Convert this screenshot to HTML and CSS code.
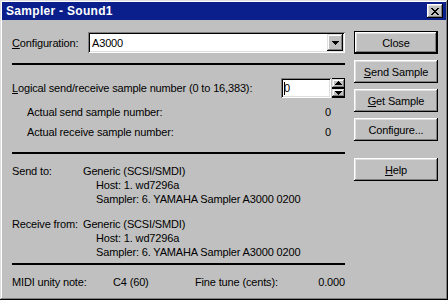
FILE: index.html
```html
<!DOCTYPE html>
<html lang="en">
<head>
    <meta charset="UTF-8">
    <title>Sampler - Sound1</title>
    <link rel="stylesheet" href="styles.css">
</head>
<body>
    <div class="window">
        <div class="titlebar">
            <span class="title">Sampler - Sound1</span>
            <div class="title-btn">
                <svg width="8" height="7" viewBox="0 0 8 7">
                    <path d="M0 0h2v1h1v1h2v-1h1v-1h2v1h-1v1h-1v1h-1v1h1v1h1v1h1v1h-2v-1h-1v-1h-2v1h-1v1h-2v-1h1v-1h1v-1h1v-1h-1v-1h-1v-1h-1z" fill="#000"/>
                </svg>
            </div>
        </div>

        <div class="dialog">
            <div class="main">
                <div class="row config-row">
                    <label class="config-label"><u>C</u>onfiguration:</label>
                    <div class="combo">
                        <span class="combo-text">A3000</span>
                        <div class="combo-arrow">
                            <svg width="7" height="4" viewBox="0 0 7 4"><path d="M0 0h7v1h-1v1h-1v1h-1v1h-1v-1h-1v-1h-1v-1h-1z" fill="#000"/></svg>
                        </div>
                    </div>
                </div>

                <div class="sep"></div>

                <div class="row logical-row">
                    <label><u>L</u>ogical send/receive sample number (0 to 16,383):</label>
                    <div class="spin">
                        <div class="spin-edit"><span class="caret"></span>0</div>
                        <div class="spin-btns">
                            <div class="spin-btn">
                                <svg width="7" height="4" viewBox="0 0 7 4"><path d="M3 0h1v1h1v1h1v1h1v1h-7v-1h1v-1h1v-1h1z" fill="#000"/></svg>
                            </div>
                            <div class="spin-btn">
                                <svg width="7" height="4" viewBox="0 0 7 4"><path d="M0 0h7v1h-1v1h-1v1h-1v1h-1v-1h-1v-1h-1v-1h-1z" fill="#000"/></svg>
                            </div>
                        </div>
                    </div>
                </div>

                <div class="actual">
                    <div class="actual-row"><span>Actual send sample number:</span><span>0</span></div>
                    <div class="actual-row"><span>Actual receive sample number:</span><span>0</span></div>
                </div>

                <div class="sep"></div>

                <div class="target">
                    <span class="target-label">Send to:</span>
                    <div class="target-info">
                        <div>Generic (SCSI/SMDI)</div>
                        <div class="sub">Host: 1. wd7296a</div>
                        <div class="sub">Sampler: 6. YAMAHA Sampler A3000 0200</div>
                    </div>
                </div>

                <div class="target receive">
                    <span class="target-label">Receive from:</span>
                    <div class="target-info">
                        <div>Generic (SCSI/SMDI)</div>
                        <div class="sub">Host: 1. wd7296a</div>
                        <div class="sub">Sampler: 6. YAMAHA Sampler A3000 0200</div>
                    </div>
                </div>

                <div class="sep sep-last"></div>

                <div class="midi">
                    <span>MIDI unity note:</span>
                    <span>C4 (60)</span>
                    <span>Fine tune (cents):</span>
                    <span class="fine">0.000</span>
                </div>
            </div>

            <div class="buttons">
                <button class="btn default">Close</button>
                <button class="btn"><u>S</u>end Sample</button>
                <button class="btn"><u>G</u>et Sample</button>
                <button class="btn">Configure...</button>
                <button class="btn help"><u>H</u>elp</button>
            </div>
        </div>
    </div>
</body>
</html>
```

FILE: styles.css
```css
body {
    margin: 0;
    padding: 0;
    background-color: #c0c0c0;
    font-family: 'Liberation Sans', Arial, sans-serif;
    font-size: 11px;
    letter-spacing: -0.15px;
    color: #000;
}

u {
    text-decoration: underline;
    text-underline-offset: 1px;
}

.window {
    width: 448px;
    height: 300px;
    box-sizing: border-box;
    padding: 2px;
    background: #c0c0c0;
    box-shadow: inset -1px -1px #000, inset 1px 1px #dfdfdf, inset -2px -2px #808080, inset 2px 2px #fff;
}

.titlebar {
    height: 18px;
    background: #0a1f8c;
    display: flex;
    align-items: center;
    justify-content: space-between;
    padding: 0 3px 0 4px;
}

.title {
    color: #fff;
    font-weight: bold;
    font-size: 12px;
    letter-spacing: 0.3px;
}

.title-btn {
    width: 16px;
    height: 14px;
    box-sizing: border-box;
    background: #c0c0c0;
    display: flex;
    align-items: center;
    justify-content: center;
    box-shadow: inset -1px -1px #000, inset 1px 1px #fff, inset -2px -2px #808080, inset 2px 2px #dfdfdf;
}

.dialog {
    display: flex;
    gap: 9px;
    padding: 11px 0 0 10px;
}

.main {
    width: 333px;
}

.row {
    display: flex;
    align-items: center;
    justify-content: space-between;
}

.config-row {
    margin-top: 1px;
}

.combo {
    width: 257px;
    height: 21px;
    box-sizing: border-box;
    background: #fff;
    display: flex;
    align-items: center;
    justify-content: space-between;
    padding: 2px;
    box-shadow: inset 1px 1px #808080, inset -1px -1px #fff, inset 2px 2px #000, inset -2px -2px #dfdfdf;
}

.combo-text {
    padding-left: 2px;
}

.combo-arrow, .spin-btn {
    background: #c0c0c0;
    display: flex;
    align-items: center;
    justify-content: center;
    box-shadow: inset -1px -1px #000, inset 1px 1px #dfdfdf, inset -2px -2px #808080, inset 2px 2px #fff;
}

.combo-arrow {
    width: 16px;
    height: 17px;
}

.sep {
    height: 2px;
    background: #000;
    margin-top: 10px;
}

.logical-row {
    margin-top: 13px;
}

.spin {
    display: flex;
    width: 64px;
    height: 20px;
    gap: 1px;
}

.spin-edit {
    flex: 1;
    background: #fff;
    display: flex;
    align-items: center;
    padding-left: 3px;
    box-shadow: inset 1px 1px #808080, inset -1px -1px #fff, inset 2px 2px #000, inset -2px -2px #dfdfdf;
}

.caret {
    width: 1px;
    height: 13px;
    background: #000;
    margin-right: -1px;
}

.spin-btns {
    width: 13px;
    display: flex;
    flex-direction: column;
    background: #000;
    gap: 1px;
    padding: 1px 0;
}

.spin-btn {
    flex: 1;
}

.actual {
    margin-top: 4px;
    padding: 0 14px 0 15px;
}

.actual-row {
    display: flex;
    justify-content: space-between;
    line-height: 20px;
}

.sep + .target {
    margin-top: 10px;
}

.target {
    display: flex;
    line-height: 14px;
}

.target.receive {
    margin-top: 11px;
}

.target-label {
    width: 71px;
}

.target-info .sub {
    padding-left: 13px;
}

.sep-last {
    margin-top: 4px;
}

.midi {
    display: grid;
    grid-template-columns: 101px 82px 1fr auto;
    line-height: 14px;
    margin-top: 10px;
}

.buttons {
    width: 84px;
    display: flex;
    flex-direction: column;
    gap: 6px;
}

.btn {
    height: 23px;
    padding: 0;
    border: none;
    background: #c0c0c0;
    font-family: inherit;
    font-size: 11px;
    letter-spacing: inherit;
    color: #000;
    box-shadow: inset -1px -1px #000, inset 1px 1px #fff, inset -2px -2px #808080, inset 2px 2px #dfdfdf;
}

.btn.default {
    box-shadow: inset 0 0 0 1px #000, inset -2px -2px #000, inset 2px 2px #fff, inset -3px -3px #808080, inset 3px 3px #dfdfdf;
}

.btn.help {
    margin-top: 11px;
}
```
